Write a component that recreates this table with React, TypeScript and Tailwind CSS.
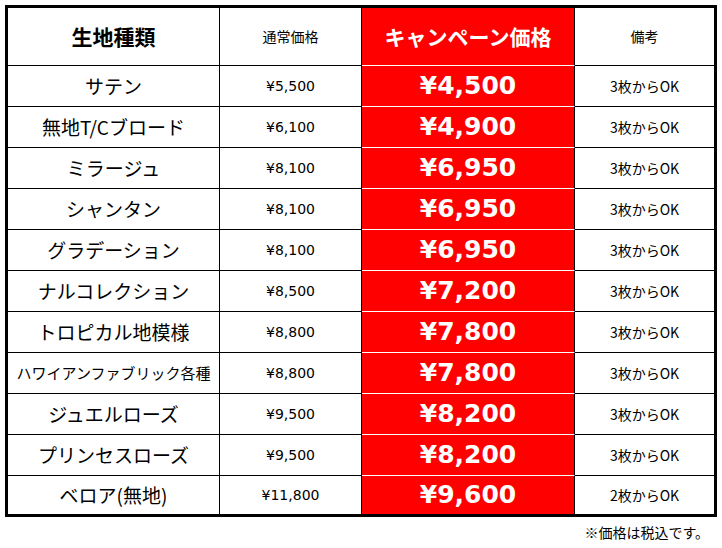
import React from 'react';

interface Fabric {
  name: string;
  regular: string;
  campaign: string;
  note: string;
  small?: boolean;
}

const fabrics: Fabric[] = [
  { name: 'サテン', regular: '¥5,500', campaign: '¥4,500', note: '3枚からOK' },
  { name: '無地T/Cブロード', regular: '¥6,100', campaign: '¥4,900', note: '3枚からOK' },
  { name: 'ミラージュ', regular: '¥8,100', campaign: '¥6,950', note: '3枚からOK' },
  { name: 'シャンタン', regular: '¥8,100', campaign: '¥6,950', note: '3枚からOK' },
  { name: 'グラデーション', regular: '¥8,100', campaign: '¥6,950', note: '3枚からOK' },
  { name: 'ナルコレクション', regular: '¥8,500', campaign: '¥7,200', note: '3枚からOK' },
  { name: 'トロピカル地模様', regular: '¥8,800', campaign: '¥7,800', note: '3枚からOK' },
  { name: 'ハワイアンファブリック各種', regular: '¥8,800', campaign: '¥7,800', note: '3枚からOK', small: true },
  { name: 'ジュエルローズ', regular: '¥9,500', campaign: '¥8,200', note: '3枚からOK' },
  { name: 'プリンセスローズ', regular: '¥9,500', campaign: '¥8,200', note: '3枚からOK' },
  { name: 'ベロア(無地)', regular: '¥11,800', campaign: '¥9,600', note: '2枚からOK' },
];

const jp = "font-['Noto_Sans_CJK_JP',sans-serif]";

const App: React.FC = () => {
  return (
    <div className={`w-[722px] h-[548px] bg-white text-black ${jp}`}>
      <div className="ml-[5px] pt-[5px] w-[712px]">
        <div className="border-[3px] border-black">
          {/* header */}
          <div className="flex h-[58px]">
            <div className="w-[212px] flex items-center justify-center border-r border-b border-black text-[21px] font-bold">
              生地種類
            </div>
            <div className="w-[142px] flex items-center justify-center border-r border-b border-black text-[14px]">
              通常価格
            </div>
            <div className="w-[213px] flex items-center justify-center border-r border-black border-b border-b-white bg-[#ff0000] text-white text-[21px] font-bold">
              キャンペーン価格
            </div>
            <div className="flex-1 flex items-center justify-center border-b border-black text-[14px]">
              備考
            </div>
          </div>

          {fabrics.map((f, i) => {
            const last = i === fabrics.length - 1;
            return (
              <div key={f.name} className={`flex ${last ? 'h-[38px]' : 'h-[41px]'}`}>
                <div
                  className={`w-[212px] flex items-center justify-center border-r border-black whitespace-nowrap ${
                    last ? '' : 'border-b'
                  } ${f.small ? 'text-[15px]' : 'text-[19px]'}`}
                >
                  {f.name}
                </div>
                <div
                  className={`w-[142px] flex items-center justify-center border-r border-black text-[14px] font-['DejaVu_Sans',sans-serif] ${
                    last ? '' : 'border-b'
                  }`}
                >
                  {f.regular}
                </div>
                <div
                  className={`w-[213px] flex items-center justify-center border-r border-black bg-[#ff0000] text-white text-[25px] font-bold font-['DejaVu_Sans',sans-serif] ${
                    last ? '' : 'border-b border-b-white'
                  }`}
                >
                  {f.campaign}
                </div>
                <div
                  className={`flex-1 flex items-center justify-center border-black text-[14px] ${
                    last ? '' : 'border-b'
                  }`}
                >
                  {f.note}
                </div>
              </div>
            );
          })}
        </div>
        <p className="mt-[5px] pr-[8px] text-right text-[14px] leading-[20px]">※価格は税込です。</p>
      </div>
    </div>
  );
};

export default App;
